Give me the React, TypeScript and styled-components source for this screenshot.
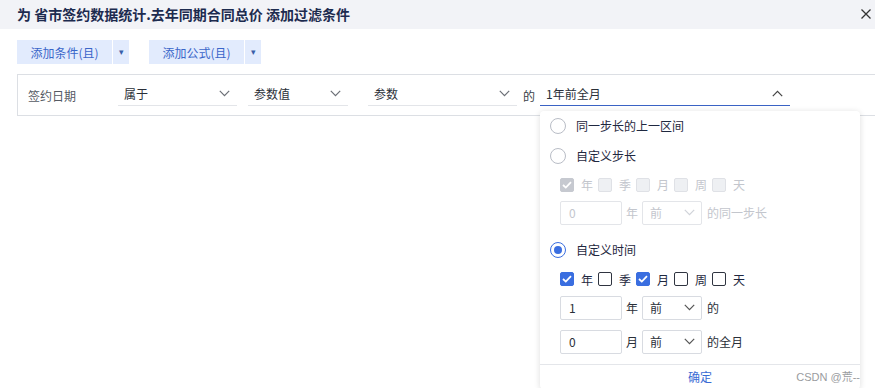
import styled, { createGlobalStyle } from "styled-components"

const GlobalStyle = createGlobalStyle`
  html {
    overflow: hidden;
  }
  body {
    margin: 0;
    padding: 0;
    min-height: 100vh;
    background: #fff;
    font-family: "Noto Sans CJK SC", "Noto Sans", sans-serif;
    font-size: 12px;
    color: #1f2329;
  }
  * { box-sizing: border-box; }
`

// иконки
const Chevron = ({ up, color = "#6b6f76" }: { up?: boolean; color?: string }) => (
  <svg width="11" height="7" viewBox="0 0 11 7" style={{ transform: up ? "rotate(180deg)" : undefined }}>
    <polyline points="0.8,0.8 5.5,5.6 10.2,0.8" fill="none" stroke={color} strokeWidth="1.2" />
  </svg>
)

const Tick = () => (
  <svg width="10" height="8" viewBox="0 0 10 8">
    <polyline points="1,4 3.8,6.6 9,1.2" fill="none" stroke="#fff" strokeWidth="1.8" />
  </svg>
)

const CloseIcon = () => (
  <svg width="10" height="10" viewBox="0 0 10 10">
    <path d="M0.5 0.5 L9.5 9.5 M9.5 0.5 L0.5 9.5" stroke="#333" strokeWidth="1.3" />
  </svg>
)

type Opt = { label: string; checked?: boolean }

const App = () => {
  const stepUnits: Opt[] = [
    { label: "年", checked: true },
    { label: "季" },
    { label: "月" },
    { label: "周" },
    { label: "天" },
  ]
  const timeUnits: Opt[] = [
    { label: "年", checked: true },
    { label: "季" },
    { label: "月", checked: true },
    { label: "周" },
    { label: "天" },
  ]

  return (
    <>
      <GlobalStyle />
      <Header>
        <Title>为 省市签约数据统计.去年同期合同总价 添加过滤条件</Title>
        <CloseBtn>
          <CloseIcon />
        </CloseBtn>
      </Header>

      <Body>
        <Toolbar>
          <SplitButton>
            <MainPart>添加条件(且)</MainPart>
            <ArrowPart>▾</ArrowPart>
          </SplitButton>
          <SplitButton>
            <MainPart>添加公式(且)</MainPart>
            <ArrowPart>▾</ArrowPart>
          </SplitButton>
        </Toolbar>

        <FilterRow>
          <FieldLabel>签约日期</FieldLabel>
          <Select $width={119} $gap={11}>
            <span>属于</span>
            <Chevron />
          </Select>
          <Select $width={100} $gap={20}>
            <span>参数值</span>
            <Chevron />
          </Select>
          <Select $width={149} $gap={6}>
            <span>参数</span>
            <Chevron />
          </Select>
          <Of>的</Of>
          <PopAnchor>
            <Select $width={250} $gap={0} $active>
              <span>1年前全月</span>
              <Chevron up color="#444" />
            </Select>

            <Panel>
              <RadioRow>
                <Radio />
                <span>同一步长的上一区间</span>
              </RadioRow>
              <RadioRow>
                <Radio />
                <span>自定义步长</span>
              </RadioRow>
              <Sub>
                <CheckRow>
                  {stepUnits.map((u) => (
                    <CheckItem key={u.label} $disabled>
                      <Box $checked={u.checked} $disabled>
                        {u.checked && <Tick />}
                      </Box>
                      {u.label}
                    </CheckItem>
                  ))}
                </CheckRow>
                <InputRow $disabled>
                  <NumInput $disabled>0</NumInput>
                  <Unit>年</Unit>
                  <MiniSelect $disabled>
                    <span>前</span>
                    <Chevron color="#d0d3d9" />
                  </MiniSelect>
                  <Suffix>的同一步长</Suffix>
                </InputRow>
              </Sub>

              <RadioRow $spaced>
                <Radio $checked />
                <span>自定义时间</span>
              </RadioRow>
              <Sub>
                <CheckRow $tight>
                  {timeUnits.map((u) => (
                    <CheckItem key={u.label}>
                      <Box $checked={u.checked}>{u.checked && <Tick />}</Box>
                      {u.label}
                    </CheckItem>
                  ))}
                </CheckRow>
                <InputRow>
                  <NumInput>1</NumInput>
                  <Unit>年</Unit>
                  <MiniSelect>
                    <span>前</span>
                    <Chevron color="#555" />
                  </MiniSelect>
                  <Suffix>的</Suffix>
                </InputRow>
                <InputRow $spaced>
                  <NumInput>0</NumInput>
                  <Unit>月</Unit>
                  <MiniSelect>
                    <span>前</span>
                    <Chevron color="#555" />
                  </MiniSelect>
                  <Suffix>的全月</Suffix>
                </InputRow>
              </Sub>

              <Footer>
                <Confirm>确定</Confirm>
                <Watermark>CSDN @荒--</Watermark>
              </Footer>
            </Panel>
          </PopAnchor>
        </FilterRow>
      </Body>
    </>
  )
}

export default App

/* шапка */

const Header = styled.div`
  height: 29px;
  background: #f2f3f7;
  display: flex;
  align-items: center;
  justify-content: space-between;
  padding: 0 2px 0 17px;
`

const Title = styled.div`
  font-size: 14px;
  font-weight: 700;
  color: #1d2b4f;
  line-height: 20px;
  margin-top: -1px;
`

const CloseBtn = styled.div`
  width: 12px;
  height: 20px;
  display: flex;
  align-items: center;
  margin-top: -2px;
`

const Body = styled.div`
  padding: 0 0 0 17px;
`

/* кнопки */

const Toolbar = styled.div`
  display: flex;
  gap: 20px;
  margin-top: 11px;
`

const SplitButton = styled.div`
  display: flex;
  gap: 1px;
  height: 24px;
`

const MainPart = styled.div`
  width: 95px;
  background: #e2ebfd;
  color: #3a66c9;
  display: flex;
  align-items: center;
  justify-content: center;
  font-size: 12px;
`

const ArrowPart = styled.div`
  width: 16px;
  background: #e2ebfd;
  color: #3a5fa8;
  display: flex;
  align-items: center;
  justify-content: center;
  font-size: 9px;
  padding-bottom: 2px;
`

/* строка фильтра */

const FilterRow = styled.div`
  margin-top: 10px;
  height: 42px;
  width: 870px;
  border: 1px solid #dcdfe4;
  display: flex;
  align-items: center;
  padding-left: 10px;
`

const FieldLabel = styled.div`
  width: 90px;
  color: #555a63;
  font-size: 12px;
`

const Select = styled.div<{ $width: number; $gap: number; $active?: boolean }>`
  width: ${(p) => p.$width}px;
  margin-right: ${(p) => p.$gap}px;
  height: 21px;
  border-bottom: 1px solid ${(p) => (p.$active ? "#3a62c4" : "#e3e5e9")};
  display: flex;
  align-items: center;
  justify-content: space-between;
  padding: 0 7px 2px 6px;
  color: #2a2f38;
  font-size: 12px;
`

const Of = styled.div`
  margin-right: 5px;
  color: #3a3f48;
`

const PopAnchor = styled.div`
  position: relative;
`

/* выпадающая панель */

const Panel = styled.div`
  position: absolute;
  top: 26px;
  left: 0;
  width: 320px;
  height: 278px;
  background: #fff;
  border-radius: 4px;
  box-shadow: 0 1px 6px rgba(0, 0, 0, 0.14);
  padding-left: 10px;
  display: flex;
  flex-direction: column;
  z-index: 2;
`

const RadioRow = styled.div<{ $spaced?: boolean }>`
  height: 30px;
  flex-shrink: 0;
  display: flex;
  align-items: center;
  gap: 10px;
  margin-top: ${(p) => (p.$spaced ? "10px" : "0")};
  color: #1f2840;
`

const Radio = styled.span<{ $checked?: boolean }>`
  width: 16px;
  height: 16px;
  border-radius: 50%;
  border: 1px solid ${(p) => (p.$checked ? "#3a6ee0" : "#b9bdc6")};
  display: flex;
  align-items: center;
  justify-content: center;

  &::after {
    content: "";
    width: 8px;
    height: 8px;
    border-radius: 50%;
    background: #3a6ee0;
    display: ${(p) => (p.$checked ? "block" : "none")};
  }
`

const Sub = styled.div`
  padding-left: 10px;
  display: flex;
  flex-direction: column;
`

const CheckRow = styled.div<{ $tight?: boolean }>`
  height: ${(p) => (p.$tight ? "29px" : "28px")};
  display: flex;
  align-items: center;
`

const CheckItem = styled.div<{ $disabled?: boolean }>`
  display: flex;
  align-items: center;
  gap: 7px;
  margin-right: 5px;
  color: ${(p) => (p.$disabled ? "#c3c6cd" : "#1f2840")};
`

const Box = styled.span<{ $checked?: boolean; $disabled?: boolean }>`
  width: 14px;
  height: 14px;
  border-radius: 2px;
  display: flex;
  align-items: center;
  justify-content: center;
  border: 1px solid
    ${(p) =>
      p.$disabled ? (p.$checked ? "#c6c9d0" : "#dfe1e6") : p.$checked ? "#3a6ee0" : "#2f3440"};
  background: ${(p) =>
    p.$disabled ? (p.$checked ? "#c6c9d0" : "#eef0f3") : p.$checked ? "#3a6ee0" : "#fff"};
`

const InputRow = styled.div<{ $disabled?: boolean; $spaced?: boolean }>`
  height: 24px;
  margin-top: ${(p) => (p.$spaced ? "10px" : "2px")};
  display: flex;
  align-items: center;
  color: ${(p) => (p.$disabled ? "#c3c6cd" : "#2a2f38")};
`

const NumInput = styled.div<{ $disabled?: boolean }>`
  width: 62px;
  height: 24px;
  border: 1px solid ${(p) => (p.$disabled ? "#e3e5e9" : "#d8dbe1")};
  border-radius: 2px;
  padding-left: 8px;
  display: flex;
  align-items: center;
  color: ${(p) => (p.$disabled ? "#c3c6cd" : "#2a2f38")};
`

const Unit = styled.span`
  margin: 0 4px;
`

const MiniSelect = styled.div<{ $disabled?: boolean }>`
  width: 60px;
  height: 24px;
  border: 1px solid ${(p) => (p.$disabled ? "#e3e5e9" : "#d8dbe1")};
  border-radius: 2px;
  padding: 0 6px 0 7px;
  display: flex;
  align-items: center;
  justify-content: space-between;
`

const Suffix = styled.span`
  margin-left: 5px;
`

const Footer = styled.div`
  margin-top: 10px;
  margin-left: -10px;
  flex: 1;
  border-top: 1px solid #e4e6ea;
  display: flex;
  align-items: center;
  justify-content: center;
  position: relative;
`

const Confirm = styled.span`
  color: #3a6bd4;
  font-size: 12px;
  margin-bottom: 1px;
`

const Watermark = styled.span`
  position: absolute;
  right: 0;
  top: 3px;
  font-family: "Liberation Sans", "Noto Sans CJK SC", sans-serif;
  font-size: 11px;
  color: #9a9ca0;
`
